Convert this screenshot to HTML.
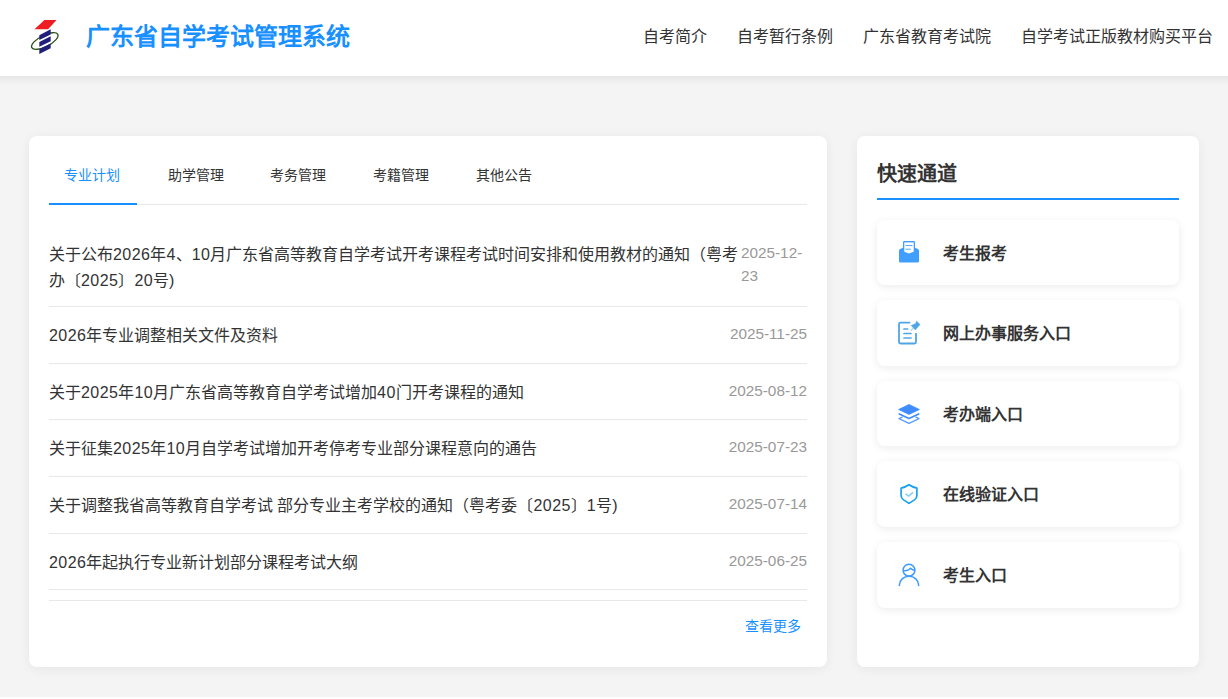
<!DOCTYPE html>
<html lang="zh-CN">
<head>
<meta charset="utf-8">
<title>广东省自学考试管理系统</title>
<style>
*{margin:0;padding:0;box-sizing:border-box;}
html,body{width:1228px;height:699px;overflow:hidden;}
body{background:#f4f4f4;font-family:"Liberation Sans",sans-serif;color:#333;position:relative;}
.hdr{position:absolute;left:0;top:0;width:1228px;height:76px;background:#fff;z-index:2;}
.hsh{position:absolute;left:-40px;top:0;width:1308px;height:76px;background:#fff;box-shadow:0 2px 8px rgba(0,0,0,.09);z-index:1;}
.logo{position:absolute;left:20px;top:10px;width:60px;height:65px;}
.title{position:absolute;left:86px;top:21px;font-size:24px;font-weight:bold;color:#1890ff;line-height:32px;white-space:nowrap;}
.nav{position:absolute;top:27px;font-size:16px;color:#333;line-height:20px;white-space:nowrap;}
.card{position:absolute;background:#fff;border-radius:8px;box-shadow:0 2px 12px rgba(0,0,0,.06);}
.left{left:29px;top:136px;width:798px;height:531px;}
.right{left:857px;top:136px;width:342px;height:531px;}
.tabline{position:absolute;left:20px;top:68px;width:758px;height:1px;background:#e8e8e8;}
.tabul{position:absolute;left:20px;top:67px;width:88px;height:2px;background:#1890ff;}
.tab{position:absolute;top:29px;font-size:14px;line-height:20px;color:#333;white-space:nowrap;}
.tab.on{color:#1890ff;}
.row{position:absolute;left:20px;width:758px;border-bottom:1px solid #e8e8e8;}
.rt{position:absolute;left:0;font-size:16px;line-height:26px;color:#333;white-space:nowrap;}
.n{letter-spacing:0.45px;}
.rd{position:absolute;right:0;font-size:15.3px;line-height:23px;color:#999;white-space:nowrap;text-align:left;}
.more{position:absolute;left:716px;top:480px;font-size:14px;line-height:20px;color:#1890ff;}
.qt{position:absolute;left:20px;top:24px;font-size:20px;font-weight:bold;line-height:28px;color:#333;}
.qline{position:absolute;left:20px;top:62px;width:302px;height:2px;background:#1890ff;}
.qi{position:absolute;left:20px;width:302px;height:65px;background:#fff;border-radius:8px;box-shadow:0 2px 8px rgba(0,0,0,.08);}
.qi svg{position:absolute;left:13px;top:15px;width:40px;height:35px;}
.qi span{position:absolute;left:66px;top:22px;font-size:16px;font-weight:bold;line-height:24px;color:#333;white-space:nowrap;}
</style>
</head>
<body>
<div class="hsh"></div>
<div class="hdr">
  <svg class="logo" viewBox="0 0 60 65">
    <path d="M24.4 10 L36.5 10 Q33 14 28 19.3 L14.5 19.3 Z" fill="#ee1d23"/>
    <ellipse cx="24.8" cy="31" rx="14.6" ry="5.6" fill="none" stroke="#2b5219" stroke-width="1.35" transform="rotate(-27 24.8 31)"/>
    <path d="M19.3 25.2 L30.7 19.3 L30.7 24.4 L19.3 30.1 Z" fill="#20207c"/>
    <path d="M19.3 32 L30.7 26.3 L30.7 31.2 L19.3 36.8 Z" fill="#20207c"/>
    <path d="M19.3 38.9 L30.7 33.4 L30.7 38.3 L19.3 44 Z" fill="#20207c"/>
  </svg>
  <div class="title">广东省自学考试管理系统</div>
  <div class="nav" style="left:643px">自考简介</div>
  <div class="nav" style="left:737px">自考暂行条例</div>
  <div class="nav" style="left:863px">广东省教育考试院</div>
  <div class="nav" style="left:1021px">自学考试正版教材购买平台</div>
</div>

<div class="card left">
  <div class="tab on" style="left:35px">专业计划</div>
  <div class="tab" style="left:139px">助学管理</div>
  <div class="tab" style="left:241px">考务管理</div>
  <div class="tab" style="left:344px">考籍管理</div>
  <div class="tab" style="left:447px">其他公告</div>
  <div class="tabline"></div>
  <div class="tabul"></div>

  <div class="row" style="top:100px;height:71px">
    <div class="rt" style="top:6px">关于公布<span class="n">2026</span>年<span class="n">4</span>、<span class="n">10</span>月广东省高等教育自学考试开考课程考试时间安排和使用教材的通知（粤考<br>办〔<span class="n">2025</span>〕<span class="n">20</span>号)</div>
    <div class="rd" style="top:5px;left:692px">2025-12-<br>23</div>
  </div>
  <div class="row" style="top:171px;height:57px">
    <div class="rt" style="top:16px"><span class="n">2026</span>年专业调整相关文件及资料</div>
    <div class="rd" style="top:15px">2025-11-25</div>
  </div>
  <div class="row" style="top:228px;height:56px">
    <div class="rt" style="top:16px">关于<span class="n">2025</span>年<span class="n">10</span>月广东省高等教育自学考试增加<span class="n">40</span>门开考课程的通知</div>
    <div class="rd" style="top:15px">2025-08-12</div>
  </div>
  <div class="row" style="top:284px;height:57px">
    <div class="rt" style="top:16px">关于征集<span class="n">2025</span>年<span class="n">10</span>月自学考试增加开考停考专业部分课程意向的通告</div>
    <div class="rd" style="top:15px">2025-07-23</div>
  </div>
  <div class="row" style="top:341px;height:57px">
    <div class="rt" style="top:16px">关于调整我省高等教育自学考试 部分专业主考学校的通知（粤考委〔<span class="n">2025</span>〕<span class="n">1</span>号)</div>
    <div class="rd" style="top:15px">2025-07-14</div>
  </div>
  <div class="row" style="top:398px;height:56px">
    <div class="rt" style="top:16px"><span class="n">2026</span>年起执行专业新计划部分课程考试大纲</div>
    <div class="rd" style="top:15px">2025-06-25</div>
  </div>
  <div class="row" style="top:464px;height:0px"></div>
  <div class="more">查看更多</div>
</div>

<div class="card right">
  <div class="qt">快速通道</div>
  <div class="qline"></div>
  <div class="qi" style="top:84px">
    <svg viewBox="0 0 40 35"><path d="M13 7.2 Q13 6 14.2 6 H23.8 Q25 6 25 7.2 V17 H13 Z" fill="#409eff"/><path d="M14.3 7.4 H23.7 V17 H14.3 Z" fill="#fff"/><path d="M15.8 10.5 H22 M15.8 14.2 H20.3" stroke="#409eff" stroke-width="0.9" stroke-linecap="round"/><path d="M9 15.6 Q9 14.6 10 14.1 L13 12.8 V16.3 L19 18.6 L25 16.3 V12.8 L28 14.1 Q29 14.6 29 15.6 V26.3 Q29 27.5 27.8 27.5 H10.2 Q9 27.5 9 26.3 Z" fill="#409eff"/></svg>
    <span>考生报考</span>
  </div>
  <div class="qi" style="top:164px;height:66px">
    <svg viewBox="0 0 40 35"><path d="M19.5 7.6 H10.4 Q9 7.6 9 9 V27.1 Q9 28.5 10.4 28.5 H24.6 Q26 28.5 26 27.1 V18.6" fill="none" stroke="#4fa6e6" stroke-width="1.8" stroke-linecap="round"/><path d="M14 14 H17.6 M14 18.5 H21 M14 23 H21" stroke="#4fa6e6" stroke-width="1.7" stroke-linecap="round"/><path d="M26.5 6.1 L30.1 9.4 L25.3 15 L21.1 10.6 L25.7 8.4 Z" fill="#4fa6e6" stroke="#4fa6e6" stroke-width="0.4" stroke-linejoin="round"/><path d="M23.4 13.1 L21.1 15.3" stroke="#7bbdec" stroke-width="1" stroke-linecap="round"/></svg>
    <span>网上办事服务入口</span>
  </div>
  <div class="qi" style="top:245px">
    <svg style="top:14px" viewBox="0 0 40 35"><path d="M8.6 14.5 L19 9.5 L29.4 14.5 L19 19.4 Z" fill="#3f8cff" stroke="#3f8cff" stroke-width="0.8" stroke-linejoin="round"/><path d="M9.3 18.9 L19 23.4 L28.7 18.9" fill="none" stroke="#3f8cff" stroke-width="1.6" stroke-linecap="round" stroke-linejoin="round"/><path d="M12 22.2 L9 23.6 L19 28.3 L29 23.6 L26 22.2" fill="none" stroke="#5a9cff" stroke-width="1.3" stroke-linecap="round" stroke-linejoin="round"/></svg>
    <span>考办端入口</span>
  </div>
  <div class="qi" style="top:325px;height:66px">
    <svg viewBox="0 0 40 35"><path d="M19 8.7 Q16 10.9 11.1 12.1 V19.4 Q11.1 21.9 13.6 23.9 L19 27.4 L24.4 23.9 Q26.9 21.9 26.9 19.4 V12.1 Q22 10.9 19 8.7 Z" fill="none" stroke="#1aa0f0" stroke-width="1.7" stroke-linejoin="round"/><path d="M16 18.1 L18.6 20.1 L22.6 16.6" fill="none" stroke="#86cdf3" stroke-width="1.4" stroke-linecap="round" stroke-linejoin="round"/></svg>
    <span>在线验证入口</span>
  </div>
  <div class="qi" style="top:406px;height:66px">
    <svg style="top:14px" viewBox="0 0 40 35"><circle cx="19" cy="14.2" r="5.9" fill="none" stroke="#3d9bff" stroke-width="1.5"/><path d="M13.5 14.6 Q17.5 15.3 20.5 12.2 Q22.5 14.2 24.8 14.2" fill="none" stroke="#3d9bff" stroke-width="1.4"/><path d="M9.3 29.4 A9.7 9.2 0 0 1 28.7 29.4" fill="none" stroke="#3d9bff" stroke-width="1.5" stroke-linecap="round"/></svg>
    <span>考生入口</span>
  </div>
</div>
<div style="position:absolute;left:-40px;top:697px;width:1308px;height:10px;background:#fff;"></div>
</body>
</html>
